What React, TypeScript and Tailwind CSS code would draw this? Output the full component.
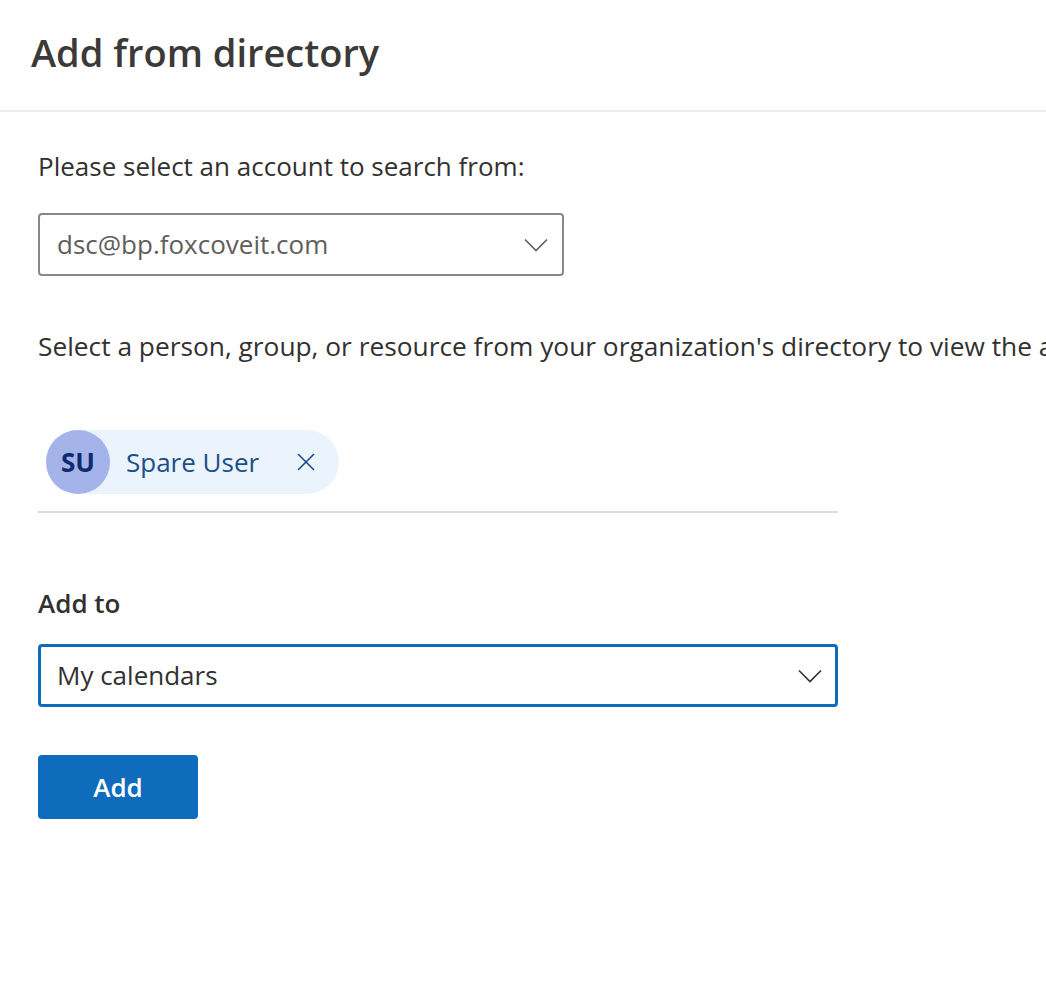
import { X } from 'lucide-react';

const Chevron = ({ className }: { className?: string }) => (
  <svg viewBox="0 0 24 14" className={className} fill="none" stroke="currentColor" strokeWidth={1.6}>
    <path d="M1 1.5 L12 12.5 L23 1.5" />
  </svg>
);

const App = () => {
  return (
    <div
      className="w-[1046px] h-[988px] overflow-hidden bg-white text-[#323130]"
      style={{ fontFamily: '"Open Sans", "Noto Sans", sans-serif' }}
    >
      <div className="h-[112px] border-b-2 border-[#edebe9] pl-[31px] pt-[26px]">
        <h1 className="text-[38px] leading-[52px] font-semibold text-[#3b3a39]">
          Add from directory
        </h1>
      </div>

      <div className="pl-[38px] pt-[34px]">
        <p className="text-[26px] leading-[40px] text-[#323130] whitespace-nowrap">
          Please select an account to search from:
        </p>

        <div className="mt-[27px] w-[526px] h-[63px] border-2 border-[#8a8886] rounded-[4px] flex items-center justify-between pl-[17px] pr-[14px]">
          <span className="text-[26px] text-[#605e5c]">dsc@bp.foxcoveit.com</span>
          <Chevron className="w-[24px] h-[14px] text-[#605e5c]" />
        </div>

        <div className="mt-[50px] w-[1008px] overflow-hidden">
          <p className="text-[26.3px] leading-[40px] text-[#323130] whitespace-nowrap">
            Select a person, group, or resource from your organization's directory to view the associated calendar.
          </p>
        </div>

        <div className="mt-[64px] w-[800px] h-[83px] border-b-2 border-[#e1dfdd] pl-[8px]">
          <div className="inline-flex items-center h-[64px] rounded-full bg-[#ebf3fc] pr-[18px]">
            <div className="w-[64px] h-[64px] rounded-full bg-[#a4b3e9] flex items-center justify-center text-[26px] font-bold text-[#0f2a6e]">
              SU
            </div>
            <span className="ml-[16px] text-[26px] text-[#1b4f8a]">Spare User</span>
            <X className="ml-[32px] w-[30px] h-[30px] text-[#1b4f8a]" strokeWidth={1.3} />
          </div>
        </div>

        <div className="mt-[70px] text-[26px] leading-[40px] font-semibold text-[#323130]">Add to</div>

        <div className="mt-[21px] w-[800px] h-[63px] border-[3px] border-[#0f6cbd] rounded-[4px] flex items-center justify-between pl-[16px] pr-[13px]">
          <span className="text-[26px] text-[#323130]">My calendars</span>
          <Chevron className="w-[24px] h-[14px] text-[#323130]" />
        </div>

        <button className="mt-[48px] w-[160px] h-[64px] rounded-[4px] bg-[#0f6cbd] text-white text-[26px] font-semibold">
          Add
        </button>
      </div>
    </div>
  );
};

export default App;
